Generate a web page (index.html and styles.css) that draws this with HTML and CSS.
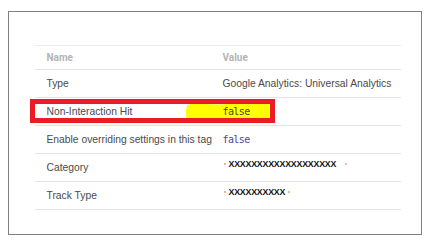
FILE: index.html
```html
<!DOCTYPE html>
<html>
<head>
<meta charset="utf-8">
<link rel="stylesheet" href="styles.css">
</head>
<body>
<div class="frame">
  <div class="table">
    <div class="row head">
      <div class="name">Name</div>
      <div class="value">Value</div>
    </div>
    <div class="row">
      <div class="name">Type</div>
      <div class="value">Google Analytics: Universal Analytics</div>
    </div>
    <div class="row marked">
      <div class="highlight"></div>
      <div class="redbox"></div>
      <div class="name">Non-Interaction Hit</div>
      <div class="value"><span class="code on-yellow">false</span></div>
    </div>
    <div class="row">
      <div class="name">Enable overriding settings in this tag</div>
      <div class="value"><span class="code">false</span></div>
    </div>
    <div class="row">
      <div class="name">Category</div>
      <div class="value raised"><span class="dot"></span><span class="xx">XXXXXXXXXXXXXXXXXXX</span><span class="dot far"></span></div>
    </div>
    <div class="row">
      <div class="name">Track Type</div>
      <div class="value raised"><span class="dot"></span><span class="xx">XXXXXXXXXX</span><span class="dot near"></span></div>
    </div>
  </div>
</div>
</body>
</html>
```

FILE: styles.css
```css
html, body {
  margin: 0;
  padding: 0;
  background: #ffffff;
}

.frame {
  box-sizing: border-box;
  margin: 11px 0 0 8px;
  width: 414px;
  height: 224px;
  border: 1.5px solid #808080;
  padding: 32.5px 0 0 25.5px;
}

.table {
  width: 366px;
  font-family: "Liberation Sans", Arial, sans-serif;
  font-size: 10.3px;
  color: #4a4a4a;
}

.row {
  position: relative;
  display: flex;
  align-items: center;
  height: 28px;
  box-sizing: border-box;
  border-bottom: 1px solid #e4e4e4;
}

.row.head {
  height: 25px;
  border-top: 1px solid #ececec;
  font-family: Roboto, "Liberation Sans", sans-serif;
  font-weight: 700;
  font-size: 10px;
  color: #b4b4b4;
}

.name {
  position: relative;
  width: 176px;
  padding-left: 12px;
  white-space: nowrap;
}

.value {
  position: relative;
  white-space: nowrap;
  display: flex;
  align-items: center;
}

.value.raised {
  margin-top: -7px;
}

.code {
  font-family: "DejaVu Sans Mono", "Liberation Mono", monospace;
  font-size: 10px;
  letter-spacing: -0.6px;
  color: #4b4896;
}

.code.on-yellow {
  color: #4a4a28;
}

.highlight {
  position: absolute;
  left: 151px;
  top: 6px;
  width: 84px;
  height: 15px;
  background: #ffff00;
  clip-path: polygon(2% 12%, 8% 0, 40% 6%, 62% 0, 100% 0, 100% 100%, 1% 100%, 0 55%);
}

.redbox {
  position: absolute;
  left: -5px;
  top: 1px;
  width: 245px;
  height: 24px;
  box-sizing: border-box;
  border: 5px solid #ed1c24;
}

.xx {
  font-family: "Liberation Sans", Arial, sans-serif;
  font-weight: 700;
  font-size: 8.8px;
  color: #111111;
  letter-spacing: -0.2px;
}

.dot {
  display: inline-block;
  width: 2px;
  height: 2px;
  border-radius: 1px;
  background: #f2a074;
  margin: 0 3px 0 1px;
}

.dot.far {
  margin-left: 9px;
}

.dot.near {
  margin-left: 3px;
}
```
